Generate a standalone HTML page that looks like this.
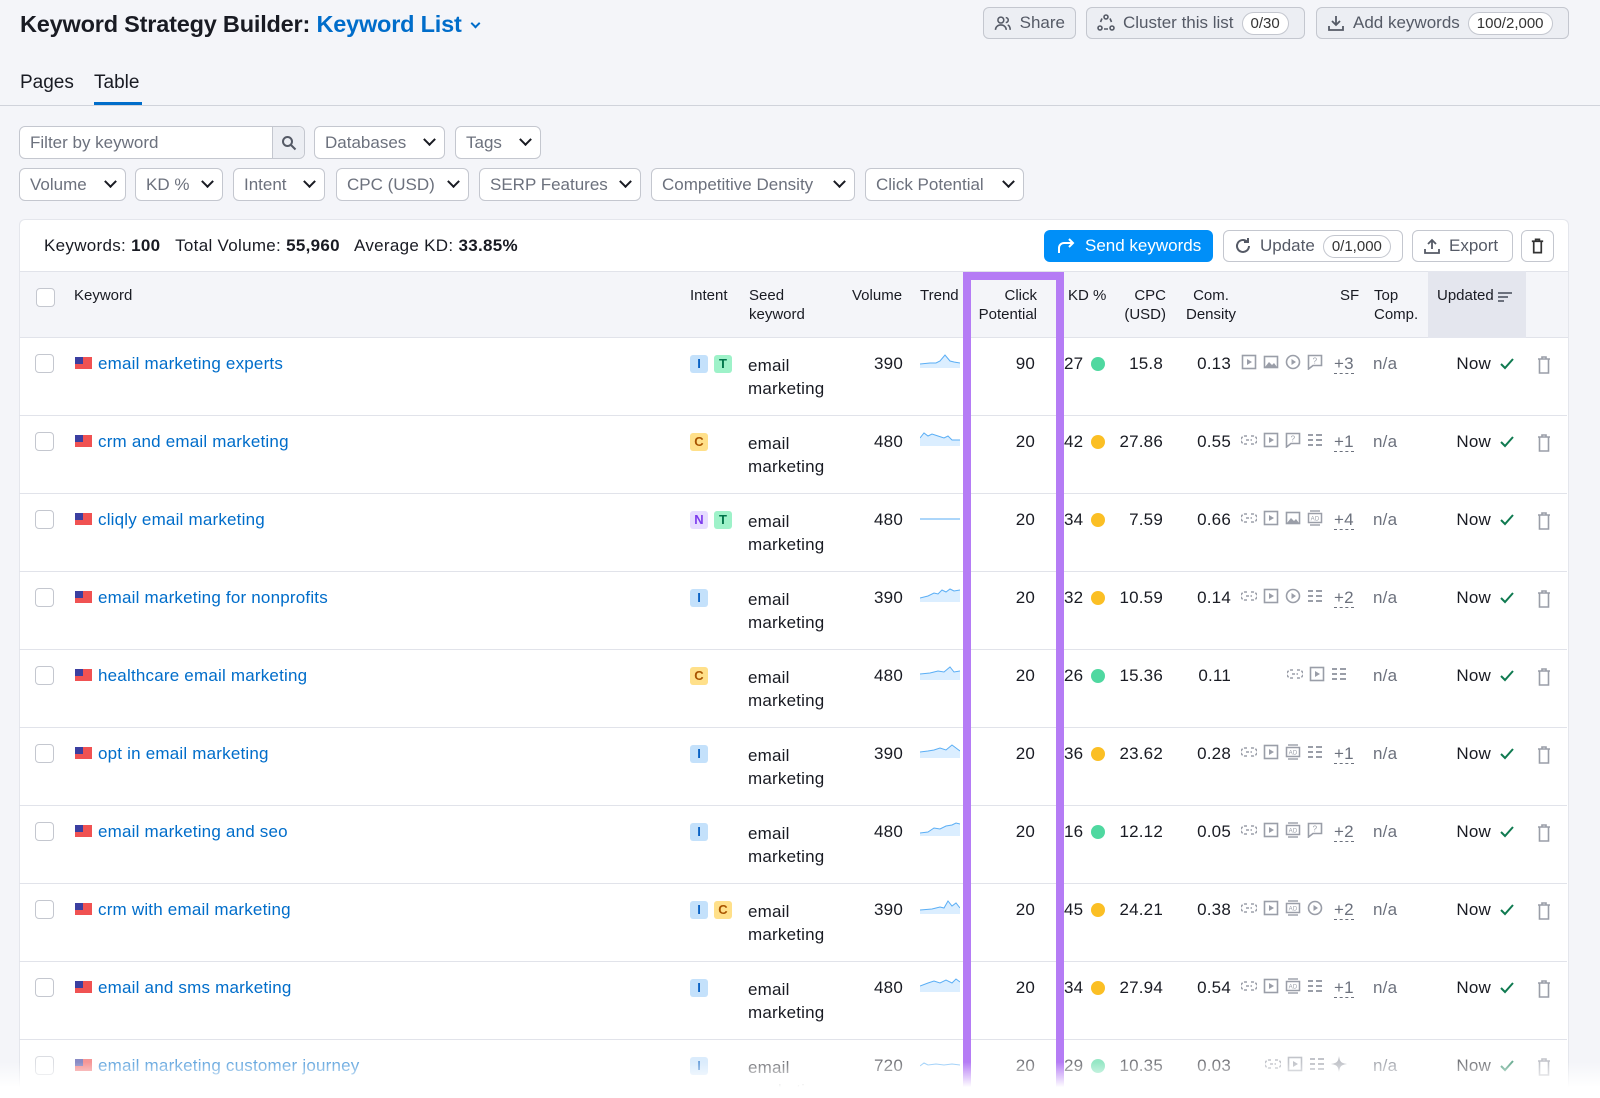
<!DOCTYPE html>
<html><head><meta charset="utf-8">
<style>
*{box-sizing:border-box;margin:0;padding:0}
html{overflow:hidden;width:1600px;height:1098px}
body{width:1600px;height:1098px;overflow:hidden;background:#f4f5f9;font-family:"Liberation Sans",Arial,sans-serif;color:#191b23;position:relative}
.a{position:absolute}
.btn{position:absolute;border:1px solid #c4c7cf;border-radius:6px;background:#eceef3;display:flex;align-items:center;gap:8px;padding:0 10px;font-size:17px;color:#555a66;height:32px;white-space:nowrap}
.pill{border:1px solid #c4c7cf;border-radius:14px;background:#fff;font-size:15px;padding:2px 8px;color:#333}
.dd{position:absolute;height:33px;border:1px solid #c4c7cf;border-radius:6px;background:#fff;display:flex;align-items:center;padding:0 10px;font-size:17px;color:#6c717d;gap:8px;justify-content:space-between;white-space:nowrap}
.chev{flex:none;width:9px;height:9px;border-right:2px solid #191b23;border-bottom:2px solid #191b23;transform:rotate(45deg) translate(-2px,-2px)}
.panel{position:absolute;left:19px;top:219px;width:1550px;height:879px;background:#fff;border-radius:6px 6px 0 0;border:1px solid #e4e6ec;border-bottom:none}
.hdr{position:absolute;left:0;top:51px;width:1548px;height:67px;background:#f4f5f9;border-top:1px solid #e1e3ea;border-bottom:1px solid #e1e3ea;font-size:15px;color:#191b23}
.hdr div{position:absolute;line-height:19px}
.row{position:absolute;left:0;width:1548px;height:78px;border-bottom:1px solid #e1e3ea;font-size:17px;letter-spacing:.2px}
.row>div{position:absolute}
.cb{left:16px;top:16px;width:19px;height:19px;border:1px solid #c4c7cf;border-radius:4px;background:#fff}
.flag{left:56px;top:19px;width:17px;height:12px;background:#f05252}
.flag:before{content:"";position:absolute;left:0;top:0;width:8px;height:7px;background:#3b3fa0}
.kw{left:79px;top:16px;color:#006dca}
.b{top:17px;width:18px;height:18px;border-radius:3px;font-size:13px;font-weight:bold;text-align:center;line-height:18px;letter-spacing:0}
.bI{background:#c4e1fb;color:#0a62c4}.bT{background:#9ef2c9;color:#00744a}.bC{background:#ffe08a;color:#a95400}.bN{background:#e6dcff;color:#7c3aed}
.seed{left:729px;top:16px;line-height:23px}
.vol{right:664px;top:16px;text-align:right}
.tr{left:901px;top:14px}
.cp{right:532px;top:16px}
.kd{left:1045px;top:16px}
.dot{top:19px;left:1072px;width:14px;height:14px;border-radius:50%}
.g{background:#4fd8a0}.o{background:#fbbf24}
.cpc{right:404px;top:16px}
.cd{right:336px;top:16px}
.sf{left:1222px;top:16px;display:flex;gap:6px;align-items:center}
.sf svg{width:16px;height:16px}
.plus{left:1315px;top:16px;color:#6c717d;border-bottom:1px dashed #6c717d;line-height:19px}
.na{left:1354px;top:16px;color:#6c717d}
.now{right:76px;top:16px}
.chk{left:1480px;top:18px}
.trash{left:1517px;top:18px}
</style></head><body>
<div class="a" style="left:20px;top:11px;font-size:23.5px;font-weight:bold;letter-spacing:-0.2px">Keyword Strategy Builder: <span style="color:#006dca">Keyword List</span> <span style="display:inline-block;width:7px;height:7px;border-right:2px solid #006dca;border-bottom:2px solid #006dca;transform:rotate(45deg);margin-left:4px;position:relative;top:-5px"></span></div>
<div class="btn" style="left:983px;top:7px;width:93px"><svg width="18" height="18" viewBox="0 0 18 18" fill="none" stroke="#555a66" stroke-width="1.6"><circle cx="7" cy="6" r="3"/><path d="M1.5 16c0-3 2.5-5 5.5-5s5.5 2 5.5 5M12 3.5a2.5 2.5 0 010 5M14 11c1.5.5 2.5 2.5 2.5 5"/></svg>Share</div>
<div class="btn" style="left:1086px;top:7px;width:219px"><svg width="18" height="18" viewBox="0 0 18 18" fill="none" stroke="#555a66" stroke-width="1.6"><circle cx="9" cy="3" r="2"/><circle cx="3" cy="14" r="2"/><circle cx="15" cy="14" r="2"/><path d="M5 4.5L3.5 8M13 4.5l1.5 3.5M7 15h4"/></svg>Cluster this list <span class="pill">0/30</span></div>
<div class="btn" style="left:1316px;top:7px;width:253px"><svg width="18" height="18" viewBox="0 0 18 18" fill="none" stroke="#555a66" stroke-width="1.8"><path d="M9 2v9M5 7l4 4 4-4M2 12v4h14v-4"/></svg>Add keywords <span class="pill">100/2,000</span></div>
<div class="a" style="left:20px;top:72px;font-size:19px">Pages</div>
<div class="a" style="left:94px;top:72px;font-size:19px">Table</div>
<div class="a" style="left:94px;top:102px;width:48px;height:3px;background:#006dca"></div>
<div class="a" style="left:0;top:105px;width:1600px;height:1px;background:#d0d3db"></div>
<div class="dd" style="left:19px;top:126px;width:286px;padding:0"><span style="padding-left:10px">Filter by keyword</span><span style="width:32px;height:31px;border-left:1px solid #c4c7cf;background:#eceef3;display:flex;align-items:center;justify-content:center;border-radius:0 6px 6px 0"><svg width="16" height="16" viewBox="0 0 16 16" fill="none" stroke="#555a66" stroke-width="2"><circle cx="6.5" cy="6.5" r="4.5"/><path d="M10 10l4.5 4.5"/></svg></span></div>
<div class="dd" style="left:314px;top:126px;width:131px">Databases<span class="chev"></span></div>
<div class="dd" style="left:455px;top:126px;width:86px">Tags<span class="chev"></span></div>
<div class="dd" style="left:19px;top:168px;width:107px">Volume<span class="chev"></span></div>
<div class="dd" style="left:135px;top:168px;width:88px">KD %<span class="chev"></span></div>
<div class="dd" style="left:233px;top:168px;width:92px">Intent<span class="chev"></span></div>
<div class="dd" style="left:336px;top:168px;width:133px">CPC (USD)<span class="chev"></span></div>
<div class="dd" style="left:479px;top:168px;width:162px">SERP Features<span class="chev"></span></div>
<div class="dd" style="left:651px;top:168px;width:204px">Competitive Density<span class="chev"></span></div>
<div class="dd" style="left:865px;top:168px;width:159px">Click Potential<span class="chev"></span></div>

<div class="panel">
 <div class="a" style="left:24px;top:16px;font-size:17px;letter-spacing:.3px">Keywords: <b>100</b>&nbsp;&nbsp; Total Volume: <b>55,960</b>&nbsp;&nbsp; Average KD: <b>33.85%</b></div>
 <div class="a" style="left:1024px;top:10px;width:169px;height:32px;background:#008ff8;border-radius:6px;color:#fff;font-size:17px;display:flex;align-items:center;gap:9px;padding-left:12px"><svg width="20" height="18" viewBox="0 0 20 18" fill="none" stroke="#fff" stroke-width="2"><path d="M3 16V11a5 5 0 015-5h9M13 2l4 4-4 4"/></svg>Send keywords</div>
 <div class="btn" style="left:1203px;top:10px;width:180px;background:#fff"><svg width="18" height="18" viewBox="0 0 18 18" fill="none" stroke="#555a66" stroke-width="2"><path d="M15 9a6 6 0 11-2-4.5M14 1v4h-4"/></svg>Update <span class="pill">0/1,000</span></div>
 <div class="btn" style="left:1392px;top:10px;width:101px;background:#fff"><svg width="18" height="18" viewBox="0 0 18 18" fill="none" stroke="#555a66" stroke-width="1.8"><path d="M9 12V3M5 7l4-4 4 4M2 12v4h14v-4"/></svg>Export</div>
 <div class="btn" style="left:1501px;top:10px;width:33px;background:#fff;padding:0 7px"><svg width="18" height="18" viewBox="0 0 18 18" fill="none" stroke="#333" stroke-width="1.8"><path d="M3 4h12M7 4V2h4v2M5 4v12h8V4"/></svg></div>
 <div class="hdr">
  <div style="left:16px;top:16px;width:19px;height:19px;border:1px solid #c4c7cf;border-radius:4px;background:#fff"></div>
  <div style="left:54px;top:14px">Keyword</div>
  <div style="left:670px;top:14px">Intent</div>
  <div style="left:729px;top:14px">Seed<br>keyword</div>
  <div style="left:832px;top:14px">Volume</div>
  <div style="left:900px;top:14px">Trend</div>
  <div style="left:956px;top:14px;text-align:right;width:61px">Click<br>Potential</div>
  <div style="left:1048px;top:14px">KD %</div>
  <div style="left:1102px;top:14px;text-align:right;width:44px">CPC<br>(USD)</div>
  <div style="left:1162px;top:14px;text-align:center;width:58px">Com.<br>Density</div>
  <div style="left:1320px;top:14px">SF</div>
  <div style="left:1354px;top:14px">Top<br>Comp.</div>
  <div style="left:1408px;top:-1px;width:98px;height:67px;background:#e4e6ee"></div>
  <div style="left:1417px;top:14px">Updated <span style="display:inline-block;vertical-align:middle;width:14px"><span style="display:block;height:2px;background:#6c717d;width:14px;margin:2px 0"></span><span style="display:block;height:2px;background:#6c717d;width:10px;margin:2px 0"></span><span style="display:block;height:2px;background:#6c717d;width:6px"></span></span></div>
 </div>
</div>

<svg width="0" height="0" style="position:absolute">
<defs>
<symbol id="lk" viewBox="0 0 16 16"><path d="M6 4H4a4 4 0 000 8h2M10 4h2a4 4 0 010 8h-2M5 8h6" fill="none" stroke="#9a9ea8" stroke-width="1.6" stroke-dasharray="3 1.5"/></symbol>
<symbol id="vd" viewBox="0 0 16 16"><rect x="1.5" y="1.5" width="13" height="13" fill="none" stroke="#9a9ea8" stroke-width="1.6"/><path d="M6 5v6l5-3z" fill="#9a9ea8"/></symbol>
<symbol id="im" viewBox="0 0 16 16"><rect x="1.5" y="2.5" width="13" height="11" fill="none" stroke="#9a9ea8" stroke-width="1.6"/><path d="M2 13l4-5 3 3 2-2 3 4z" fill="#9a9ea8"/></symbol>
<symbol id="pc" viewBox="0 0 16 16"><circle cx="8" cy="8" r="6.5" fill="none" stroke="#9a9ea8" stroke-width="1.6"/><path d="M6.5 5v6l4.5-3z" fill="#9a9ea8"/></symbol>
<symbol id="qu" viewBox="0 0 16 16"><path d="M1.5 1.5h13v10H6l-4.5 3.5z" fill="none" stroke="#9a9ea8" stroke-width="1.6"/><text x="8" y="9.5" font-size="8" text-anchor="middle" fill="#9a9ea8" font-family="Liberation Sans">?</text></symbol>
<symbol id="ls" viewBox="0 0 16 16"><path d="M1 3h5M9 3h6M1 8h5M9 8h6M1 13h5M9 13h6" stroke="#9a9ea8" stroke-width="2"/></symbol>
<symbol id="ad" viewBox="0 0 16 16"><path d="M3 1h10" stroke="#9a9ea8" stroke-width="1.4"/><rect x="1.5" y="3.5" width="13" height="9" fill="none" stroke="#9a9ea8" stroke-width="1.5"/><text x="8" y="10.5" font-size="6" text-anchor="middle" fill="#9a9ea8" font-family="Liberation Sans">AD</text><path d="M3 15h10" stroke="#9a9ea8" stroke-width="1.4"/></symbol>
<symbol id="st" viewBox="0 0 16 16"><path d="M8 0C9 6 10 7 16 8 10 9 9 10 8 16 7 10 6 9 0 8 6 7 7 6 8 0z" fill="#9a9ea8"/></symbol>
<symbol id="tk" viewBox="0 0 16 16"><path d="M2 8l4 4 8-9" fill="none" stroke="#0f7a50" stroke-width="2"/></symbol>
<symbol id="tr" viewBox="0 0 16 18"><path d="M2 3h12M6 3V1h4v2M3.5 3v14h9V3" fill="none" stroke="#9a9ea8" stroke-width="1.6"/></symbol>
</defs></svg>

<div class="a" style="left:19px;top:338px;width:1550px;height:760px;overflow:hidden">
<div class="row" style="top:0">
 <div class="cb"></div><div class="flag"></div><div class="kw">email marketing experts</div>
 <div class="b bI" style="left:671px">I</div><div class="b bT" style="left:695px">T</div>
 <div class="seed">email<br>marketing</div><div class="vol">390</div>
 <div class="tr"><svg width="40" height="16"><path d="M0 12L10 11 16 11 20 9 25 3 30 9 34 10 40 11V16H0z" fill="#dbeeff"/><path d="M0 12L10 11 16 11 20 9 25 3 30 9 34 10 40 11" fill="none" stroke="#5aaef5"/></svg></div>
 <div class="cp">90</div><div class="kd">27</div><div class="dot g"></div><div class="cpc">15.8</div><div class="cd">0.13</div>
 <div class="sf"><svg><use href="#vd"/></svg><svg><use href="#im"/></svg><svg><use href="#pc"/></svg><svg><use href="#qu"/></svg></div>
 <div class="plus">+3</div><div class="na">n/a</div><div class="now">Now</div><div class="chk"><svg width="16" height="16"><use href="#tk"/></svg></div><div class="trash"><svg width="16" height="18"><use href="#tr"/></svg></div>
</div>
<div class="row" style="top:78px">
 <div class="cb"></div><div class="flag"></div><div class="kw">crm and email marketing</div>
 <div class="b bC" style="left:671px">C</div>
 <div class="seed">email<br>marketing</div><div class="vol">480</div>
 <div class="tr"><svg width="40" height="16"><path d="M0 8L4 3 8 6 12 4 18 6 24 8 28 6 32 10 40 10V16H0z" fill="#dbeeff"/><path d="M0 8L4 3 8 6 12 4 18 6 24 8 28 6 32 10 40 10" fill="none" stroke="#5aaef5"/></svg></div>
 <div class="cp">20</div><div class="kd">42</div><div class="dot o"></div><div class="cpc">27.86</div><div class="cd">0.55</div>
 <div class="sf"><svg><use href="#lk"/></svg><svg><use href="#vd"/></svg><svg><use href="#qu"/></svg><svg><use href="#ls"/></svg></div>
 <div class="plus">+1</div><div class="na">n/a</div><div class="now">Now</div><div class="chk"><svg width="16" height="16"><use href="#tk"/></svg></div><div class="trash"><svg width="16" height="18"><use href="#tr"/></svg></div>
</div>
<div class="row" style="top:156px">
 <div class="cb"></div><div class="flag"></div><div class="kw">cliqly email marketing</div>
 <div class="b bN" style="left:671px">N</div><div class="b bT" style="left:695px">T</div>
 <div class="seed">email<br>marketing</div><div class="vol">480</div>
 <div class="tr"><svg width="40" height="16"><path d="M0 11H40" fill="none" stroke="#5aaef5"/></svg></div>
 <div class="cp">20</div><div class="kd">34</div><div class="dot o"></div><div class="cpc">7.59</div><div class="cd">0.66</div>
 <div class="sf"><svg><use href="#lk"/></svg><svg><use href="#vd"/></svg><svg><use href="#im"/></svg><svg><use href="#ad"/></svg></div>
 <div class="plus">+4</div><div class="na">n/a</div><div class="now">Now</div><div class="chk"><svg width="16" height="16"><use href="#tk"/></svg></div><div class="trash"><svg width="16" height="18"><use href="#tr"/></svg></div>
</div>
<div class="row" style="top:234px">
 <div class="cb"></div><div class="flag"></div><div class="kw">email marketing for nonprofits</div>
 <div class="b bI" style="left:671px">I</div>
 <div class="seed">email<br>marketing</div><div class="vol">390</div>
 <div class="tr"><svg width="40" height="16"><path d="M0 12L8 10 14 7 18 8 22 4 26 6 30 3 34 5 40 4V16H0z" fill="#dbeeff"/><path d="M0 12L8 10 14 7 18 8 22 4 26 6 30 3 34 5 40 4" fill="none" stroke="#5aaef5"/></svg></div>
 <div class="cp">20</div><div class="kd">32</div><div class="dot o"></div><div class="cpc">10.59</div><div class="cd">0.14</div>
 <div class="sf"><svg><use href="#lk"/></svg><svg><use href="#vd"/></svg><svg><use href="#pc"/></svg><svg><use href="#ls"/></svg></div>
 <div class="plus">+2</div><div class="na">n/a</div><div class="now">Now</div><div class="chk"><svg width="16" height="16"><use href="#tk"/></svg></div><div class="trash"><svg width="16" height="18"><use href="#tr"/></svg></div>
</div>
<div class="row" style="top:312px">
 <div class="cb"></div><div class="flag"></div><div class="kw">healthcare email marketing</div>
 <div class="b bC" style="left:671px">C</div>
 <div class="seed">email<br>marketing</div><div class="vol">480</div>
 <div class="tr"><svg width="40" height="16"><path d="M0 10L10 9 18 7 24 8 30 3 34 8 40 7V16H0z" fill="#dbeeff"/><path d="M0 10L10 9 18 7 24 8 30 3 34 8 40 7" fill="none" stroke="#5aaef5"/></svg></div>
 <div class="cp">20</div><div class="kd">26</div><div class="dot g"></div><div class="cpc">15.36</div><div class="cd">0.11</div>
 <div class="sf" style="left:1268px"><svg><use href="#lk"/></svg><svg><use href="#vd"/></svg><svg><use href="#ls"/></svg></div>
 <div class="na">n/a</div><div class="now">Now</div><div class="chk"><svg width="16" height="16"><use href="#tk"/></svg></div><div class="trash"><svg width="16" height="18"><use href="#tr"/></svg></div>
</div>
<div class="row" style="top:390px">
 <div class="cb"></div><div class="flag"></div><div class="kw">opt in email marketing</div>
 <div class="b bI" style="left:671px">I</div>
 <div class="seed">email<br>marketing</div><div class="vol">390</div>
 <div class="tr"><svg width="40" height="16"><path d="M0 10L8 9 14 8 20 6 26 8 32 3 36 6 40 9V16H0z" fill="#dbeeff"/><path d="M0 10L8 9 14 8 20 6 26 8 32 3 36 6 40 9" fill="none" stroke="#5aaef5"/></svg></div>
 <div class="cp">20</div><div class="kd">36</div><div class="dot o"></div><div class="cpc">23.62</div><div class="cd">0.28</div>
 <div class="sf"><svg><use href="#lk"/></svg><svg><use href="#vd"/></svg><svg><use href="#ad"/></svg><svg><use href="#ls"/></svg></div>
 <div class="plus">+1</div><div class="na">n/a</div><div class="now">Now</div><div class="chk"><svg width="16" height="16"><use href="#tk"/></svg></div><div class="trash"><svg width="16" height="18"><use href="#tr"/></svg></div>
</div>
<div class="row" style="top:468px">
 <div class="cb"></div><div class="flag"></div><div class="kw">email marketing and seo</div>
 <div class="b bI" style="left:671px">I</div>
 <div class="seed">email<br>marketing</div><div class="vol">480</div>
 <div class="tr"><svg width="40" height="16"><path d="M0 13L8 12 14 8 20 9 26 6 32 5 36 3 40 4V16H0z" fill="#dbeeff"/><path d="M0 13L8 12 14 8 20 9 26 6 32 5 36 3 40 4" fill="none" stroke="#5aaef5"/></svg></div>
 <div class="cp">20</div><div class="kd">16</div><div class="dot g"></div><div class="cpc">12.12</div><div class="cd">0.05</div>
 <div class="sf"><svg><use href="#lk"/></svg><svg><use href="#vd"/></svg><svg><use href="#ad"/></svg><svg><use href="#qu"/></svg></div>
 <div class="plus">+2</div><div class="na">n/a</div><div class="now">Now</div><div class="chk"><svg width="16" height="16"><use href="#tk"/></svg></div><div class="trash"><svg width="16" height="18"><use href="#tr"/></svg></div>
</div>
<div class="row" style="top:546px">
 <div class="cb"></div><div class="flag"></div><div class="kw">crm with email marketing</div>
 <div class="b bI" style="left:671px">I</div><div class="b bC" style="left:695px">C</div>
 <div class="seed">email<br>marketing</div><div class="vol">390</div>
 <div class="tr"><svg width="40" height="16"><path d="M0 12L12 11 20 9 24 10 28 3 32 8 36 5 40 10V16H0z" fill="#dbeeff"/><path d="M0 12L12 11 20 9 24 10 28 3 32 8 36 5 40 10" fill="none" stroke="#5aaef5"/></svg></div>
 <div class="cp">20</div><div class="kd">45</div><div class="dot o"></div><div class="cpc">24.21</div><div class="cd">0.38</div>
 <div class="sf"><svg><use href="#lk"/></svg><svg><use href="#vd"/></svg><svg><use href="#ad"/></svg><svg><use href="#pc"/></svg></div>
 <div class="plus">+2</div><div class="na">n/a</div><div class="now">Now</div><div class="chk"><svg width="16" height="16"><use href="#tk"/></svg></div><div class="trash"><svg width="16" height="18"><use href="#tr"/></svg></div>
</div>
<div class="row" style="top:624px">
 <div class="cb"></div><div class="flag"></div><div class="kw">email and sms marketing</div>
 <div class="b bI" style="left:671px">I</div>
 <div class="seed">email<br>marketing</div><div class="vol">480</div>
 <div class="tr"><svg width="40" height="16"><path d="M0 10L8 7 14 5 20 7 26 4 32 7 36 3 40 6V16H0z" fill="#dbeeff"/><path d="M0 10L8 7 14 5 20 7 26 4 32 7 36 3 40 6" fill="none" stroke="#5aaef5"/></svg></div>
 <div class="cp">20</div><div class="kd">34</div><div class="dot o"></div><div class="cpc">27.94</div><div class="cd">0.54</div>
 <div class="sf"><svg><use href="#lk"/></svg><svg><use href="#vd"/></svg><svg><use href="#ad"/></svg><svg><use href="#ls"/></svg></div>
 <div class="plus">+1</div><div class="na">n/a</div><div class="now">Now</div><div class="chk"><svg width="16" height="16"><use href="#tk"/></svg></div><div class="trash"><svg width="16" height="18"><use href="#tr"/></svg></div>
</div>
<div class="row" style="top:702px;opacity:.6;border:none">
 <div class="cb"></div><div class="flag"></div><div class="kw">email marketing customer journey</div>
 <div class="b bI" style="left:671px">I</div>
 <div class="seed">email<br>marketing</div><div class="vol">720</div>
 <div class="tr"><svg width="40" height="16"><path d="M0 12L4 9 8 11 16 10 24 11 32 10 40 11" fill="none" stroke="#5aaef5"/></svg></div>
 <div class="cp">20</div><div class="kd">29</div><div class="dot g"></div><div class="cpc">10.35</div><div class="cd">0.03</div>
 <div class="sf" style="left:1246px"><svg><use href="#lk"/></svg><svg><use href="#vd"/></svg><svg><use href="#ls"/></svg><svg><use href="#st"/></svg></div>
 <div class="na">n/a</div><div class="now">Now</div><div class="chk"><svg width="16" height="16"><use href="#tk"/></svg></div><div class="trash"><svg width="16" height="18"><use href="#tr"/></svg></div>
</div>
</div>
<div class="a" style="left:963px;top:272px;width:101px;height:826px;border:8px solid #b57cf5;border-bottom:none"></div>
<div class="a" style="left:0;top:1062px;width:1600px;height:36px;background:linear-gradient(rgba(255,255,255,0),#fff 70%,#fff)"></div>
</body></html>
